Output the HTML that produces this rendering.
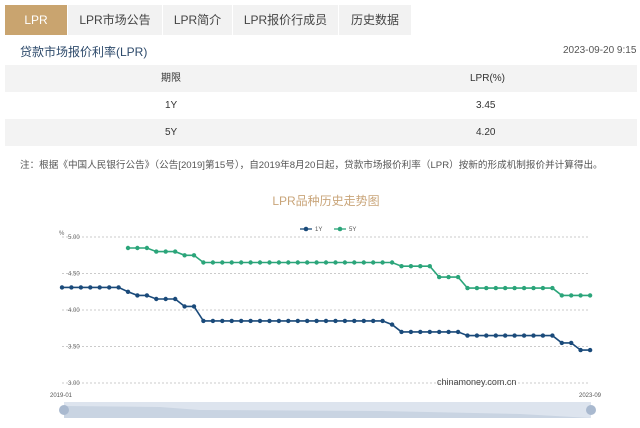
<!DOCTYPE html>
<html><head><meta charset="utf-8"><style>
body{margin:0;width:640px;height:428px;background:#fff;font-family:"Liberation Sans","Noto Sans CJK SC",sans-serif;overflow:hidden;position:relative}
.tabs{position:absolute;left:5px;top:5px;height:30px;display:flex;background:#f2f2f2}
.tabs div{height:30px;line-height:30px;font-size:12px;color:#444;text-align:center;border-right:1px solid #fff}
.tabs .on{background:#c9a46f;color:#fff}
.t{position:absolute;font-size:11px;color:#333}
.row{position:absolute;left:5px;width:632px;height:27px;line-height:27px;font-size:10px;color:#333}
.row span{position:absolute}
</style></head><body>
<div class="tabs">
<div class="on" style="width:62px">LPR</div>
<div style="width:94px">LPR市场公告</div>
<div style="width:69px">LPR简介</div>
<div style="width:105px">LPR报价行成员</div>
<div style="width:72px">历史数据</div>
</div>
<div class="t" style="left:20px;top:43px;color:#2d4a6b;font-size:12px">贷款市场报价利率(LPR)</div>
<div class="t" style="left:563px;top:45px;font-size:10px;color:#555">2023-09-20 9:15</div>
<div class="row" style="top:65px;background:#f3f3f3"><span style="left:156px">期限</span><span style="left:465px">LPR(%)</span></div>
<div class="row" style="top:92px"><span style="left:160px">1Y</span><span style="left:471px">3.45</span></div>
<div class="row" style="top:119px;background:#f3f3f3"><span style="left:160px">5Y</span><span style="left:471px">4.20</span></div>
<div class="t" style="left:20px;top:157px;font-size:9.6px;color:#555">注：根据《中国人民银行公告》（公告[2019]第15号），自2019年8月20日起，贷款市场报价利率（LPR）按新的形成机制报价并计算得出。</div>
<svg id="c" width="640" height="428" style="position:absolute;left:0;top:0" font-family="Liberation Sans, Noto Sans CJK SC, sans-serif"></svg>
<script>
var s='';
s+='<text x="326" y="205" font-size="12" fill="#c9a57a" text-anchor="middle">LPR品种历史走势图</text>';
var Y=function(v){return 383-(v-3)*73};
[5,4.5,4,3.5,3].forEach(function(v){var y=Y(v);s+='<line x1="62" x2="590" y1="'+y+'" y2="'+y+'" stroke="#bbb" stroke-dasharray="2,2" stroke-width="0.8"/><text x="68" y="'+(y+2)+'" font-size="6" fill="#666">'+v.toFixed(2)+'</text>';});
s+='<text x="59" y="235" font-size="6" fill="#666">%</text>';
s+='<line x1="300" x2="312" y1="229" y2="229" stroke="#1a4a7a" stroke-width="1.3"/><circle cx="306" cy="229" r="2.3" fill="#1a4a7a"/><text x="315" y="231" font-size="6" fill="#555">1Y</text>';
s+='<line x1="334" x2="346" y1="229" y2="229" stroke="#2ba57a" stroke-width="1.3"/><circle cx="340" cy="229" r="2.3" fill="#2ba57a"/><text x="349" y="231" font-size="6" fill="#555">5Y</text>';
var a=[];function rep(v,n){for(var i=0;i<n;i++)a.push(v)}
rep(4.31,7);a.push(4.25,4.2,4.2,4.15,4.15,4.15,4.05,4.05);rep(3.85,20);a.push(3.8);rep(3.7,7);rep(3.65,10);a.push(3.55,3.55,3.45,3.45);
var b=[];for(var i=0;i<7;i++)b.push(null);b.push(4.85,4.85,4.85,4.8,4.8,4.8,4.75,4.75);rep2(4.65,21);rep2(4.6,4);rep2(4.45,3);rep2(4.3,10);rep2(4.2,4);
function rep2(v,n){for(var i=0;i<n;i++)b.push(v)}
function line(d,c){var p='',pts='';d.forEach(function(v,i){if(v==null)return;var x=62+i*9.43,y=Y(v);p+=(p?'L':'M')+x.toFixed(1)+' '+y.toFixed(1);pts+='<circle cx="'+x.toFixed(1)+'" cy="'+y.toFixed(1)+'" r="2.2" fill="'+c+'"/>'});s+='<path d="'+p+'" fill="none" stroke="'+c+'" stroke-width="1.6"/>'+pts;}
line(b,'#2ba57a');line(a,'#1a4a7a');
s+='<text x="437" y="385" font-size="9" fill="#444">chinamoney.com.cn</text>';
s+='<text x="50" y="397" font-size="6" fill="#555">2019-01</text><text x="579" y="397" font-size="6" fill="#555">2023-09</text>';
s+='<rect x="64" y="402" width="527" height="16" fill="#dde4ee"/><path d="M64 406 L160 407 L200 410 L380 411 L520 414 L591 418 L64 418Z" fill="#c9d4e2"/>';
s+='<circle cx="64" cy="410" r="5" fill="#a9b9cf"/><circle cx="591" cy="410" r="5" fill="#a9b9cf"/>';
document.getElementById('c').innerHTML=s;
</script>
</body></html>
